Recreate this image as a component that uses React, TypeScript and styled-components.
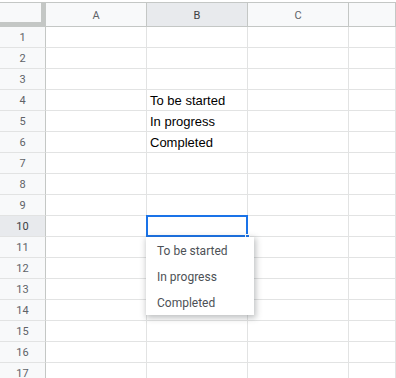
import React from "react";
import styled, { createGlobalStyle } from "styled-components";

const Global = createGlobalStyle`
  html, body { margin: 0; padding: 0; background: #fff; overflow: hidden; }
  * { box-sizing: border-box; }
`;

const Sheet = styled.div`
  margin-top: 2px;
  width: 396px;
  display: grid;
  grid-template-columns: 46px 101px 101px 101px 1fr;
  grid-auto-rows: 21px;
  grid-template-rows: 24px;
  border-top: 1px solid #c4c7c5;
`;

const Corner = styled.div`
  background: #f8f9fa;
  border-right: 1px solid #c4c7c5;
  border-bottom: 1px solid #c4c7c5;
  position: relative;
  &::after {
    content: "";
    position: absolute;
    left: 0;
    top: 0;
    right: 0;
    bottom: 0;
    border-right: 4px solid #c4c7c5;
    border-bottom: 4px solid #c4c7c5;
  }
`;

const ColHeader = styled.div<{ $active?: boolean }>`
  background: ${(p) => (p.$active ? "#e8eaed" : "#f8f9fa")};
  border-right: 1px solid #c4c7c5;
  border-bottom: 1px solid #c4c7c5;
  display: flex;
  align-items: center;
  justify-content: center;
  font-family: Roboto, "Liberation Sans", sans-serif;
  font-size: 11px;
  color: ${(p) => (p.$active ? "#3c4043" : "#5f6368")};
  padding-top: 1px;
`;

const RowHeader = styled.div<{ $active?: boolean }>`
  background: ${(p) => (p.$active ? "#e8eaed" : "#f8f9fa")};
  border-right: 1px solid #c4c7c5;
  border-bottom: 1px solid #e2e3e3;
  display: flex;
  align-items: center;
  justify-content: center;
  font-family: Roboto, "Liberation Sans", sans-serif;
  font-size: 11px;
  color: ${(p) => (p.$active ? "#3c4043" : "#5f6368")};
`;

const Cell = styled.div`
  position: relative;
  border-right: 1px solid #e2e3e3;
  border-bottom: 1px solid #e2e3e3;
  display: flex;
  align-items: center;
  padding: 1px 3px 0;
  font-family: "Liberation Sans", Arial, sans-serif;
  font-size: 13px;
  color: #000;
  white-space: nowrap;
`;

const Selection = styled.div`
  position: absolute;
  left: -1px;
  top: -1px;
  right: -1px;
  bottom: -1px;
  border: 2px solid #1a73e8;
  pointer-events: none;
  z-index: 2;
`;

const Handle = styled.div`
  position: absolute;
  right: -3px;
  bottom: -3px;
  width: 5px;
  height: 5px;
  background: #1a73e8;
  border: 1px solid #fff;
  z-index: 3;
`;

const Dropdown = styled.div`
  position: absolute;
  left: -1px;
  top: calc(100% + 1px);
  width: 108px;
  background: #fff;
  box-shadow: 1px 2px 6px 1px rgba(60, 64, 67, 0.32);
  display: flex;
  flex-direction: column;
  z-index: 4;
`;

const Option = styled.div`
  height: 26px;
  display: flex;
  align-items: center;
  padding: 2px 0 0 11px;
  font-family: Roboto, "Liberation Sans", sans-serif;
  font-size: 12px;
  color: #4d5156;
`;

const columns = ["A", "B", "C", ""];
const values: Record<number, string> = {
  4: "To be started",
  5: "In progress",
  6: "Completed",
};
const options = ["To be started", "In progress", "Completed"];

export default function App() {
  const rows = Array.from({ length: 17 }, (_, i) => i + 1);
  return (
    <>
      <Global />
      <Sheet>
        <Corner />
        {columns.map((c) => (
          <ColHeader key={c || "D"} $active={c === "B"}>
            {c}
          </ColHeader>
        ))}
        {rows.map((r) => (
          <React.Fragment key={r}>
            <RowHeader $active={r === 10}>{r}</RowHeader>
            <Cell />
            <Cell>
              {values[r] ?? ""}
              {r === 10 && (
                <>
                  <Selection />
                  <Handle />
                  <Dropdown>
                    {options.map((o) => (
                      <Option key={o}>{o}</Option>
                    ))}
                  </Dropdown>
                </>
              )}
            </Cell>
            <Cell />
            <Cell />
          </React.Fragment>
        ))}
      </Sheet>
    </>
  );
}
